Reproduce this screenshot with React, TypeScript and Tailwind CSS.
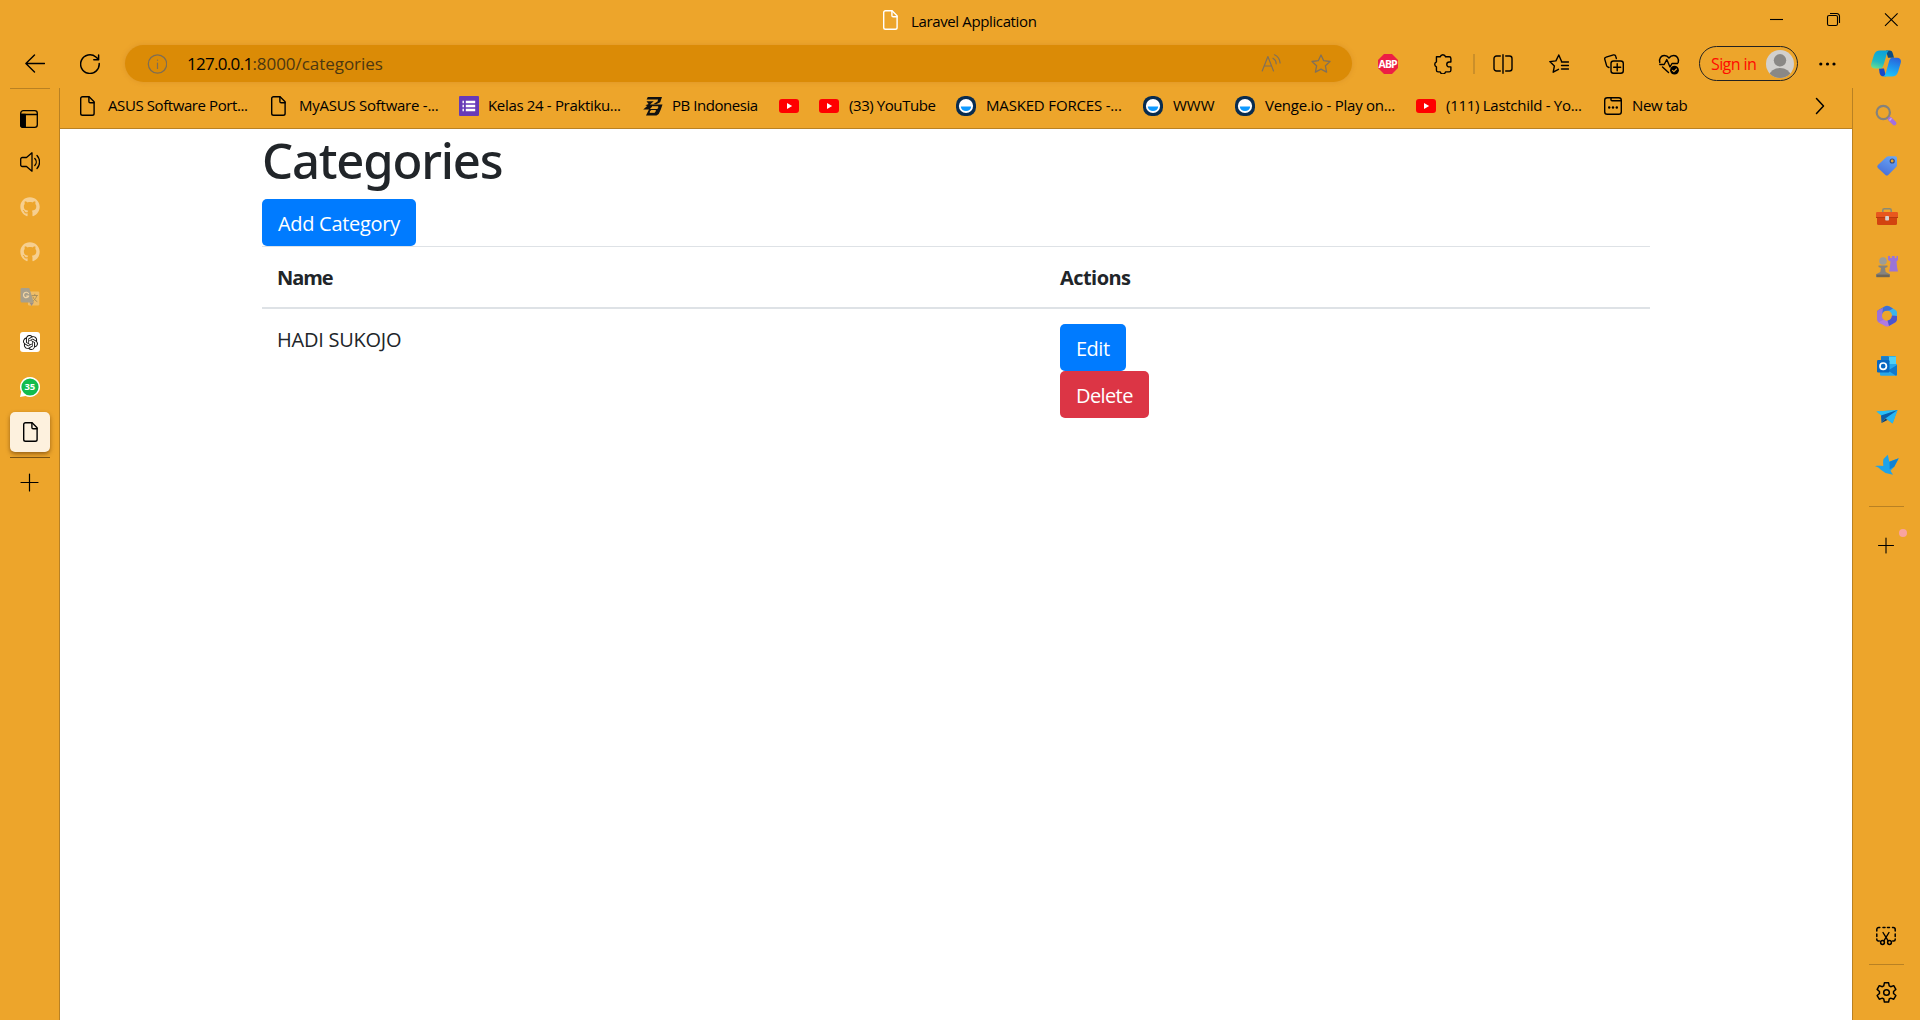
import type { ReactNode } from "react";
import { FaGithub } from "react-icons/fa";
import { SiOpenai } from "react-icons/si";

type IcoProps = { children: ReactNode; className?: string; size?: number; box?: string; sw?: number };

function Ico({ children, className = "", size = 20, box = "0 0 20 20", sw = 1.2 }: IcoProps) {
  return (
    <svg
      width={size}
      height={size}
      viewBox={box}
      fill="none"
      stroke="currentColor"
      strokeWidth={sw}
      strokeLinecap="round"
      strokeLinejoin="round"
      className={`shrink-0 ${className}`}
    >
      {children}
    </svg>
  );
}

const FileIcon = ({ className = "" }: { className?: string }) => (
  <Ico className={className} sw={1.4}>
    <path d="M3.500.7h6.600l5 5v11.800a1.800 1.800 0 0 1-1.800 1.800H3.500a1.800 1.800 0 0 1-1.800-1.800v-15A1.800 1.800 0 0 1 3.500.7Z" />
    <path d="M9.900.9v4.600a1.200 1.200 0 0 0 1.200 1.200h4" />
  </Ico>
);

const FormIcon = () => (
  <Ico>
    <rect width="20" height="20" rx="1" fill="#673ab7" stroke="none" />
    <path d="M3.500 6h1.400M3.500 10h1.400M3.500 14h1.400M6.800 6h9.400M6.800 10h9.400M6.800 14h9.400" stroke="#fff" strokeWidth="2.3" strokeLinecap="butt" />
  </Ico>
);

const BladeIcon = () => (
  <Ico>
    <g fill="#111" stroke="none">
      <path d="M4.800 1H19l-1.800 5.200-4 2h-3l4.300-2.800.6-2H3.600Z" />
      <path d="M3.500 5.300h7.300L7 8.500h12.500l-1.800 5.200-2 4.200-2.200 1.600H3l2.200-4.400.8-1.600H.2l4-3.400-1.800-.8L5.600 8Z" />
    </g>
    <path d="M9 10.800h6l-.7 1.700H7.500M7 16.300h4.700l.8-1.800H8Z" stroke="#eda52b" strokeWidth="1" fill="#eda52b" strokeLinecap="butt" />
  </Ico>
);

const YouTube = () => (
  <Ico>
    <rect y="3" width="20" height="14" rx="3" fill="#f00" stroke="none" />
    <path d="M8 7v6l5.200-3Z" fill="#fff" stroke="none" />
  </Ico>
);

const Drop = () => (
  <Ico>
    <rect width="20" height="20" rx="8.6" fill="#082c50" stroke="none" />
    <circle cx="10" cy="10" r="7.1" fill="#fff" stroke="none" />
    <path d="M4.800 10.400h10.400a5.200 4.600 0 0 1-10.400 0Z" fill="#0d99ff" stroke="none" />
  </Ico>
);

const NewTabIcon = () => (
  <Ico sw={1.4}>
    <rect x="1.7" y="1.7" width="16.6" height="16.6" rx="2.6" />
    <path d="M8 1.800v2a1 1 0 0 0 1 1h9" />
    <g fill="currentColor" stroke="none">
      <circle cx="6.2" cy="11.500" r="1.200" />
      <circle cx="10" cy="11.500" r="1.200" />
      <circle cx="13.800" cy="11.500" r="1.200" />
    </g>
  </Ico>
);

type Bookmark = { icon: ReactNode; label?: string; width: string; text?: string };

const bookmarks: Bookmark[] = [
  { icon: <FileIcon />, label: "ASUS Software Port...", width: "w-[191px]", text: "tracking-[-0.41px] pl-[9px]" },
  { icon: <FileIcon />, label: "MyASUS Software -...", width: "w-[189px]", text: "tracking-[-0.25px] pl-[9px]" },
  { icon: <FormIcon />, label: "Kelas 24 - Praktiku...", width: "w-[184px]", text: "tracking-[-0.33px] pl-[9px]" },
  { icon: <BladeIcon />, label: "PB Indonesia", width: "w-[136px]", text: "tracking-[-0.45px] pl-[9px]" },
  { icon: <YouTube />, width: "w-[40px]" },
  { icon: <YouTube />, label: "(33) YouTube", width: "w-[137px]", text: "tracking-[-0.42px] pl-[10px]" },
  { icon: <Drop />, label: "MASKED FORCES -...", width: "w-[187px]", text: "tracking-[-0.17px] pl-[10px]" },
  { icon: <Drop />, label: "WWW", width: "w-[92px]", text: "pl-[10px]" },
  { icon: <Drop />, label: "Venge.io - Play on...", width: "w-[181px]", text: "tracking-[-0.25px] pl-[10px]" },
  { icon: <YouTube />, label: "(111) Lastchild - Yo...", width: "w-[187px]", text: "tracking-[-0.28px] pl-[10px]" },
  { icon: <NewTabIcon />, label: "New tab", width: "w-[100px]", text: "tracking-[-0.4px] pl-[9px]" },
];

function TitleBar() {
  return (
    <div className="flex h-[40px] pl-[882px]">
      <FileIcon className="mt-[10px] text-white" />
      <span className="mt-[10px] w-[868px] shrink-0 pl-[9px] text-[15px] leading-[22px] tracking-[-0.37px]">Laravel Application</span>
      <svg width="130" height="40" viewBox="0 0 130 40" fill="none" stroke="#000" strokeWidth="1.1" className="shrink-0">
        <path d="M0 19.500h13" />
        <rect x="57.5" y="15.5" width="10" height="10" rx="1.6" />
        <path d="M60 13.500h6.800a2.700 2.700 0 0 1 2.700 2.700V23" />
        <path d="m115 13.300 12.600 12.600M127.600 13.300 115 25.900" />
      </svg>
    </div>
  );
}

const Copilot = () => (
  <svg width="30" height="27" viewBox="0 0 30 27" className="ml-[33px] shrink-0">
    <defs>
      <linearGradient id="cpA" x1="0.2" y1="1" x2="0.5" y2="0">
        <stop offset="0" stopColor="#6be08e" />
        <stop offset="0.4" stopColor="#22b8c0" />
        <stop offset="1" stopColor="#0aa2dc" />
      </linearGradient>
      <linearGradient id="cpB" x1="0.7" y1="0" x2="0.4" y2="1">
        <stop offset="0" stopColor="#2b62d9" />
        <stop offset="0.5" stopColor="#1f94ee" />
        <stop offset="1" stopColor="#1cc4fa" />
      </linearGradient>
    </defs>
    <path d="M15 .4h3.600c2 0 2.800 1 3.400 3.600l1 3.800h-6Z" fill="#0b4c84" />
    <path d="M8 18.500h5l2 7.800h-2.600c-2.200 0-3.200-1-3.800-3.400Z" fill="#1848c8" />
    <path d="M9 .4h9.600c-1.800.6-2.400 2-3 4.200l-3 10.200c-.6 2.200-1.400 3.800-3.600 3.800H4c-3 0-4.600-2-3.700-5.200L3 4.800C4 1.800 6 .4 9 .4Z" fill="url(#cpA)" />
    <path d="M21 26.500H12c1.800-.6 2.400-2 3-4.200l3-10.700c.6-2.200 1.400-3.800 3.600-3.800H26c3 0 4.600 2 3.700 5.200L27 22c-1 3-3 4.500-6 4.500Z" fill="url(#cpB)" />
  </svg>
);

function Toolbar() {
  return (
    <div className="flex h-[48px] items-center [&>*]:-mt-[1px]">
      <Ico className="ml-[25px]" sw={1.4}>
        <path d="M19.500 9.500H1M9.500 1 .9 9.500l8.600 8.500" />
      </Ico>
      <Ico className="ml-[35px]" sw={1.5}>
        <path d="M19.200 9.500A9.300 9.300 0 1 1 15.900 3l2.700 2.500M18.600 .9v4.800h-4.800" />
      </Ico>
      <div className="ml-[25px] flex h-[37px] w-[1227px] shrink-0 items-center rounded-full bg-[#db8b06] pl-[22px] shadow-[0_0_5px_rgba(170,100,30,0.25)]">
        <Ico className="text-[#7d6d55]">
          <circle cx="10.5" cy="10" r="9.2" />
          <path d="M10.500 9v5.500" />
          <circle cx="10.5" cy="6.2" r=".6" fill="currentColor" stroke="none" />
        </Ico>
        <span className="ml-[20px] text-[17px] leading-[24px] tracking-[-0.7px] text-black">127.0.0.1</span>
        <span className="w-[1009px] shrink-0 text-[17px] leading-[24px] tracking-[-0.05px] text-[#4d3710]">:8000/categories</span>
        <Ico className="text-[#80705a]">
          <path d="m1.200 17 5.700-14.500L12.500 17M3.200 12h7.500" />
          <path d="M12 4.200a6.500 6.500 0 0 1 3.200 5.600M13.500 .8a10 10 0 0 1 5.600 8.200" />
        </Ico>
        <Ico className="ml-[30px] text-[#80705a]" sw={1.3}>
          <path d="m10 1 2.700 5.700 6.300.8-4.600 4.300 1.200 6.300L10 15.100l-5.600 3 1.200-6.300L1 7.500l6.300-.8Z" />
        </Ico>
      </div>
      <svg width="20" height="20" viewBox="0 0 20 20" className="ml-[26px] shrink-0">
        <path d="M6 0h8l6 6v8l-6 6H6l-6-6V6Z" fill="#ed1e45" />
        <text x="9.700" y="13.900" textAnchor="middle" fontSize="10.500" fontWeight="700" letterSpacing="-0.900" fontFamily="Open Sans, sans-serif" fill="#fff">ABP</text>
      </svg>
      <Ico className="ml-[35px]" sw={1.25} box="0.9 1 18 18">
        <path d="M4 3.500h3.400a2.500 2.500 0 0 1 4.800 0h3.300a1.500 1.500 0 0 1 1.500 1.500v3.200h-1.500a2.200 2.200 0 0 0 0 4.400H17v3a1.500 1.500 0 0 1-1.500 1.500h-3.300a2.500 2.500 0 0 1-4.800 0H5.500A1.500 1.500 0 0 1 4 15.600v-3a2.500 2.500 0 0 1 0-4.600Z" />
      </Ico>
      <div className="ml-[20px] h-[20px] w-[2px] bg-[#cb8f2a]" />
      <Ico className="ml-[18px]" sw={1.4}>
        <path d="M10 .8v18.400M7.300 2H3.500A2.500 2.500 0 0 0 1 4.500v10A2.500 2.500 0 0 0 3.500 17h3.800M12.700 2h3.800A2.500 2.500 0 0 1 19 4.500v10a2.500 2.500 0 0 1-2.500 2.500h-3.800" />
      </Ico>
      <Ico className="ml-[36px]" sw={1.4}>
        <path d="M12.500 7.200 9.800 1 6.900 6.900.8 7.600l4.600 4.300-1.200 6.300 5.300-2.900M12.500 8h7M12.500 11.500h7M12.500 15h7" />
      </Ico>
      <Ico className="ml-[35px]" sw={1.4}>
        <rect x="7" y="7" width="12.3" height="12.3" rx="2.5" />
        <path d="M13.200 9.700v7M9.700 13.200h7M5 13.500l-1.300-.6a2 2 0 0 1-1.100-1.300L.8 5.400a1.800 1.800 0 0 1 1.300-2.300L9.500.9a1.800 1.800 0 0 1 2.200 1.300l.7 2.300" />
      </Ico>
      <Ico className="ml-[35px] overflow-visible" sw={1.4}>
        <path d="M.8 8.500C-.2 4.500 2.200 1.500 5.200 1.500c2.300 0 3.800 1 4.800 2.500 1-1.500 2.500-2.500 4.800-2.500 3 0 5.400 3 4.400 7M.8 10.500h4.400l2.600-5 3.200 7.500 2-3.500h5.500M3.500 13l6 5.500" />
        <circle cx="15.5" cy="16.2" r="4.4" fill="#000" stroke="none" />
        <path d="m13.500 16.300 1.400 1.400 2.600-2.700" stroke="#eda52b" strokeWidth="1.1" />
      </Ico>
      <div className="ml-[20px] flex h-[35px] w-[99px] shrink-0 items-center rounded-full border-[1.5px] border-[#222] pl-[11px] text-[16px] tracking-[-0.6px] text-[#ff0a00]">
        <span className="w-[55px] shrink-0">Sign in</span>
        <svg width="28" height="28" viewBox="0 0 28 28" className="shrink-0">
          <defs>
            <clipPath id="avatar">
              <circle cx="14" cy="14" r="14" />
            </clipPath>
          </defs>
          <g clipPath="url(#avatar)">
            <rect width="28" height="28" fill="#d2d0ce" />
            <circle cx="14" cy="10.3" r="6.2" fill="#8a8886" />
            <ellipse cx="14" cy="25.5" rx="10.5" ry="7.5" fill="#8a8886" />
          </g>
        </svg>
      </div>
      <Ico className="ml-[20px]">
        <g fill="#000" stroke="none">
          <circle cx="2.8" cy="10" r="1.6" />
          <circle cx="9.5" cy="10" r="1.6" />
          <circle cx="16" cy="10" r="1.6" />
        </g>
      </Ico>
      <Copilot />
    </div>
  );
}

function LeftRail() {
  return (
    <div className="flex w-[60px] shrink-0 flex-col border-r border-[#b98123] pl-[10px]">
      <div className="h-[1px] w-[40px] shrink-0 bg-[#b98123]" />
      <Ico className="mt-[20px] ml-[9px]" sw={1.3}>
        <rect x="1.7" y="1.7" width="16.6" height="16.6" rx="2.6" />
        <path d="M1.700 5.500h16.600" />
        <path d="M1.700 5.500h4.600v12.800H3.500a1.800 1.800 0 0 1-1.800-1.800Z" fill="#000" />
      </Ico>
      <Ico className="mt-[23px] ml-[10px]" sw={1.3}>
        <path d="M12 .8v18.400L6.500 14.500H2.300A1.600 1.600 0 0 1 .7 12.900V7.100a1.600 1.600 0 0 1 1.600-1.600h4.200ZM14.800 6.500a5 5 0 0 1 0 7M17 3.500a9.500 9.500 0 0 1 0 13" />
      </Ico>
      <FaGithub size={20} className="mt-[25px] ml-[10px] text-[#f6cf90]" />
      <FaGithub size={20} className="mt-[25px] ml-[10px] text-[#f6cf90]" />
      <Ico className="mt-[25px] ml-[10px]">
        <rect x="8" y="4.5" width="11.3" height="14" rx="1.2" fill="#f0bd66" stroke="none" />
        <path d="M1.500 1h7.800l4.500 14.500H2A1.500 1.500 0 0 1 .5 14V2.200A1.200 1.200 0 0 1 1.500 1Z" fill="#a9a08b" stroke="none" />
        <path d="m9.500 15.500 2 3.500 2.300-3.500Z" fill="#9a8f88" stroke="none" />
        <path d="M8.500 6.500a2.700 2.700 0 1 0 .2 2.500H6.500" stroke="#f3d6a6" />
        <path d="M12 8.500h5.500M14.800 7.300v1.200M16.800 8.500c-.6 2.500-1.800 4-3.600 5.500M13 10c.8 2 2.200 3.500 4 4.500" stroke="#a58d5e" strokeWidth=".9" />
      </Ico>
      <div className="mt-[25px] ml-[10px] flex h-[20px] w-[20px] items-center justify-center rounded-[3px] bg-white">
        <SiOpenai size={15} className="text-[#111]" />
      </div>
      <Ico className="mt-[25px] ml-[10px]">
        <path d="M10 0a10 10 0 1 1-4.500 18.900L0 20l1.200-5.200A10 10 0 0 1 10 0Z" fill="#fff" stroke="none" />
        <circle cx="10" cy="10" r="8.6" fill="#12bc4d" stroke="none" />
        <text x="9.7" y="13.4" textAnchor="middle" fontSize="9.5" fontWeight="700" letterSpacing="-0.3" fontFamily="Open Sans, sans-serif" fill="#fff" stroke="none">35</text>
      </Ico>
      <div className="mt-[15px] flex h-[40px] w-[40px] items-center justify-center rounded-[5px] bg-[#fdf1de] pl-[3px] shadow-[0_2px_4px_rgba(80,40,0,0.55)]">
        <FileIcon />
      </div>
      <div className="mt-[5px] h-[1px] w-[40px] bg-[#7a5212]" />
      <Ico className="mt-[15px] ml-[10px]">
        <path d="M1 9.500h17M9.500 1v17" />
      </Ico>
    </div>
  );
}

function RightRail() {
  return (
    <div className="flex w-[68px] shrink-0 flex-col items-center border-l border-[#b98123]">
      <svg width="22" height="22" viewBox="0 0 22 22" className="mt-[16px] -ml-[1px] shrink-0" fill="none">
        <circle cx="8.3" cy="8.5" r="6.6" stroke="#85827c" strokeWidth="2.2" />
        <path d="m13 13 2.500 2.500" stroke="#85827c" strokeWidth="2.5" />
        <path d="m15 15 4.300 4.300" stroke="#a36fe0" strokeWidth="4.2" strokeLinecap="round" />
        <path d="m14.500 16.500 2-2.300" stroke="#c9a6f0" strokeWidth="1.5" />
      </svg>
      <svg width="22" height="22" viewBox="0 0 22 22" className="mt-[29px] shrink-0">
        <defs>
          <linearGradient id="tag" x1="0.8" y1="0" x2="0.3" y2="1">
            <stop offset="0" stopColor="#6aa5f5" />
            <stop offset="1" stopColor="#476fd8" />
          </linearGradient>
        </defs>
        <path d="M12 1.300h7.200A1.800 1.800 0 0 1 21 3v7.200a2 2 0 0 1-.6 1.500l-8.200 8.200a2 2 0 0 1-2.800 0l-7.500-7a2 2 0 0 1 0-2.900l8.500-8Z" fill="url(#tag)" />
        <circle cx="16.2" cy="6" r="2" fill="#eda52b" stroke="#3a4d78" strokeWidth="1.2" />
      </svg>
      <svg width="22" height="22" viewBox="0 0 22 22" className="mt-[29px] shrink-0">
        <path d="M6.800 7V4.200a1.500 1.500 0 0 1 1.500-1.500h5.400a1.500 1.500 0 0 1 1.500 1.500V7" fill="none" stroke="#8a8a76" strokeWidth="1.5" />
        <rect x="1" y="8" width="20" height="11" rx="1.5" fill="#d2430f" />
        <rect y="6" width="22" height="6" rx="1.2" fill="#e8571e" />
        <path d="M0 11.500h22" stroke="#b8390f" />
        <rect x="9.2" y="10" width="3.8" height="4.6" rx=".8" fill="#d6d2cf" />
      </svg>
      <svg width="24" height="24" viewBox="0 0 24 24" className="mt-[26px] shrink-0">
        <path d="M13 2h2.200v2h1.600V2h3v2h1.600V2H23v4l-1.500 1.500.7 6.500.8 3.500h-9l.8-3.500.7-6.500L13 6Z" fill="#9b74d6" />
        <circle cx="8" cy="7" r="3.8" fill="#9c9c98" />
        <path d="M3.500 11.500h9v1.600l-2.500.9.700 4 4.300 2.200V23H1v-2.800L5.300 18l.7-4-2.500-.9Z" fill="#85837f" />
        <path d="M1.500 20.600h13v2.600h-13Z" fill="#6f6656" />
      </svg>
      <svg width="22" height="22" viewBox="0 0 22 22" className="mt-[27px] shrink-0">
        <path d="M9 1.300a4 4 0 0 1 4 0l6.500 3.700a3 3 0 0 1 1.500 2.600V12l-5-1.500a5 5 0 0 0-2.500-4.300L9 4Z" fill="#3cb4ea" />
        <path d="M9 1.300 2.500 5A3 3 0 0 0 1 7.600v5.900l4.500-1.300c0-3 1-5 3.500-6.200l4.500-.5L17 3.600l-4-2.300a4 4 0 0 0-4 0Z" fill="#3f6fd6" />
        <path d="M1 7.600v7a3 3 0 0 0 1.500 2.600L6 19.200l2.500-4C6.500 14 6 12.500 6 10.500L7 3 2.500 5A3 3 0 0 0 1 7.600Z" fill="#9c72da" />
        <path d="M2.500 17.200 9 20.900a4 4 0 0 0 4 0l6.500-3.700-4.500-2.500-4 1.200-3.500-1.200Z" fill="#b07be0" />
        <path d="M21 11v3.600a3 3 0 0 1-1.500 2.600L13 20.900l-1.500-5.400c2.500-.5 4-2 4.500-5Z" fill="#4b56cf" />
        <circle cx="11" cy="11" r="3.8" fill="#eda52b" />
      </svg>
      <svg width="22" height="22" viewBox="0 0 22 22" className="mt-[28px] shrink-0">
        <rect x="5" y="1" width="15" height="13" rx="1" fill="#1490df" />
        <path d="M12 1.500h8V11h-8Z" fill="#50d0f5" />
        <path d="M5 1.500h8v5H5Z" fill="#1b7cc8" />
        <path d="M4 9h17v10.500a1.300 1.300 0 0 1-1.300 1.300H5.300A1.300 1.300 0 0 1 4 19.500Z" fill="#28a8ea" />
        <path d="m21 10-9 5.500 8 5.300a1.300 1.300 0 0 0 1-1.300Z" fill="#1179cc" />
        <rect x="1" y="5" width="12.5" height="12.5" rx="1.2" fill="#0867c2" />
        <circle cx="7.2" cy="11.2" r="3.2" fill="none" stroke="#fff" strokeWidth="1.7" />
      </svg>
      <svg width="22" height="20" viewBox="0 0 22 20" className="mt-[30px] shrink-0">
        <path d="M.5 4.500 21.500 3l-5 13.500Z" fill="#19a7e8" />
        <path d="M21.500 3 9 10l7.500 6.500Z" fill="#27b5f2" />
        <path d="M.5 4.500 21.500 3 6 9Z" fill="#2cc0f5" />
        <path d="M5 8.500 21.500 3 9.300 11.500 5.500 16Z" fill="#0b5ea8" />
        <path d="m5.500 16 4-4.500 2 1.500Z" fill="#053f78" />
      </svg>
      <svg width="24" height="22" viewBox="0 0 24 22" className="mt-[27px] shrink-0">
        <path d="M8.500 5 12.800.8l1.500 7 9.400-3.500-4.500 8.500-3.700 4 2.600 4-7.600-1.800-5-3.500c-1-1.500-3-3-5.500-3.300 2.500-.6 6-.2 8.300-.2C8.300 10 7.800 7.500 8.500 5Z" fill="#1fa3ea" />
        <path d="m14.500 7.800 9.200-3.500-4.500 8.500-4.500 2.500Z" fill="#0f82d6" />
      </svg>
      <div className="mt-[30px] h-[1px] w-[35px] bg-[#b98123]" />
      <div className="relative mt-[29px] flex w-[68px] justify-center">
        <Ico className="-ml-[1px]" sw={1.1}>
          <path d="M2.500 9.500h15M10 2v15" />
        </Ico>
        <span className="absolute -top-[7px] right-[14px] h-[8px] w-[8px] rounded-full bg-[#f9a3a0]" />
      </div>
      <Ico className="mt-auto mb-[18px] -ml-[1px]" sw={1.5}>
        <path d="M.8 5V3.500A2 2 0 0 1 2.800 1.500h1M7 1.500h2M11.500 1.500h2M16.500 1.500h.7a2 2 0 0 1 2 2V5M19.200 8v2.500M.8 8v2.500M.8 13v.5a1.500 1.500 0 0 0 1.500 1.500h1M19.200 13v.5a1.500 1.500 0 0 1-1.500 1.500h-1" />
        <path d="m7 6.500 5 8.200M13 6.500l-5 8.200" strokeWidth="1.4" />
        <circle cx="6.5" cy="16.5" r="1.9" />
        <circle cx="13.5" cy="16.5" r="1.9" />
      </Ico>
      <div className="h-[1px] w-[35px] bg-[#b98123]" />
      <Ico className="mt-[17px] mb-[17px] -ml-[1px]" size={21} sw={1.4}>
        <circle cx="10" cy="10" r="2.7" />
        <path d="M8 .8h4l.6 2.900 1.400.8 2.900-1 2 3.500-2.200 2v1.900l2.200 2-2 3.500-2.900-1-1.400.8-.6 2.900H8l-.6-2.900-1.400-.8-2.900 1-2-3.500 2.200-2V9l-2.200-2 2-3.500 2.900 1 1.400-.8Z" />
      </Ico>
    </div>
  );
}

function BookmarksBar() {
  return (
    <div className="flex h-[41px] shrink-0 items-center border-b border-[#b98123] pb-[4px] pl-[19px]">
      {bookmarks.map((b, i) => (
        <div key={i} className={`flex shrink-0 items-center ${b.width}`}>
          {b.icon}
          {b.label && <span className={`-mt-[2px] text-[15px] leading-[22px] whitespace-nowrap ${b.text}`}>{b.label}</span>}
        </div>
      ))}
      <Ico className="mr-[22px] ml-auto" sw={1.5}>
        <path d="m6.500 2.500 7 7.500-7 7.500" />
      </Ico>
    </div>
  );
}

const btn = "flex h-[47px] items-start rounded-[5px] pt-[10px] pl-[16px] text-[20px] leading-[30px] text-white";

function Page() {
  return (
    <main className="flex-1 bg-white pl-[202px] text-[20px] leading-[30px] text-[#212529]">
      <h1 className="h-[60px] pt-[1px] font-['Noto_Sans'] text-[49px] leading-[60px] font-medium tracking-[-1.2px]">Categories</h1>
      <button className={`${btn} mt-[10px] w-[154px] bg-[#007bff] tracking-[-0.3px]`}>Add Category</button>
      <table className="w-[1388px] border-collapse text-left">
        <thead>
          <tr className="h-[61px] border-t border-b-2 border-[#dee2e6] align-top">
            <th className="w-[783px] pt-[16px] pl-[15px] font-bold tracking-[-1.1px]">Name</th>
            <th className="pt-[16px] pl-[15px] font-bold tracking-[-0.55px]">Actions</th>
          </tr>
        </thead>
        <tbody>
          <tr className="align-top">
            <td className="pt-[16px] pl-[15px] tracking-[-0.25px]">HADI SUKOJO</td>
            <td className="pt-[15px] pl-[15px]">
              <button className={`${btn} w-[66px] bg-[#007bff] tracking-[-0.5px]`}>Edit</button>
              <button className={`${btn} w-[89px] bg-[#dc3545] tracking-[-0.6px]`}>Delete</button>
            </td>
          </tr>
        </tbody>
      </table>
    </main>
  );
}

export default function App() {
  return (
    <div className="flex h-screen w-full flex-col overflow-hidden bg-[#eda52b] font-['Open_Sans',sans-serif] text-black">
      <TitleBar />
      <Toolbar />
      <div className="flex min-h-0 flex-1">
        <LeftRail />
        <div className="flex min-w-0 flex-1 flex-col">
          <BookmarksBar />
          <Page />
        </div>
        <RightRail />
      </div>
    </div>
  );
}
